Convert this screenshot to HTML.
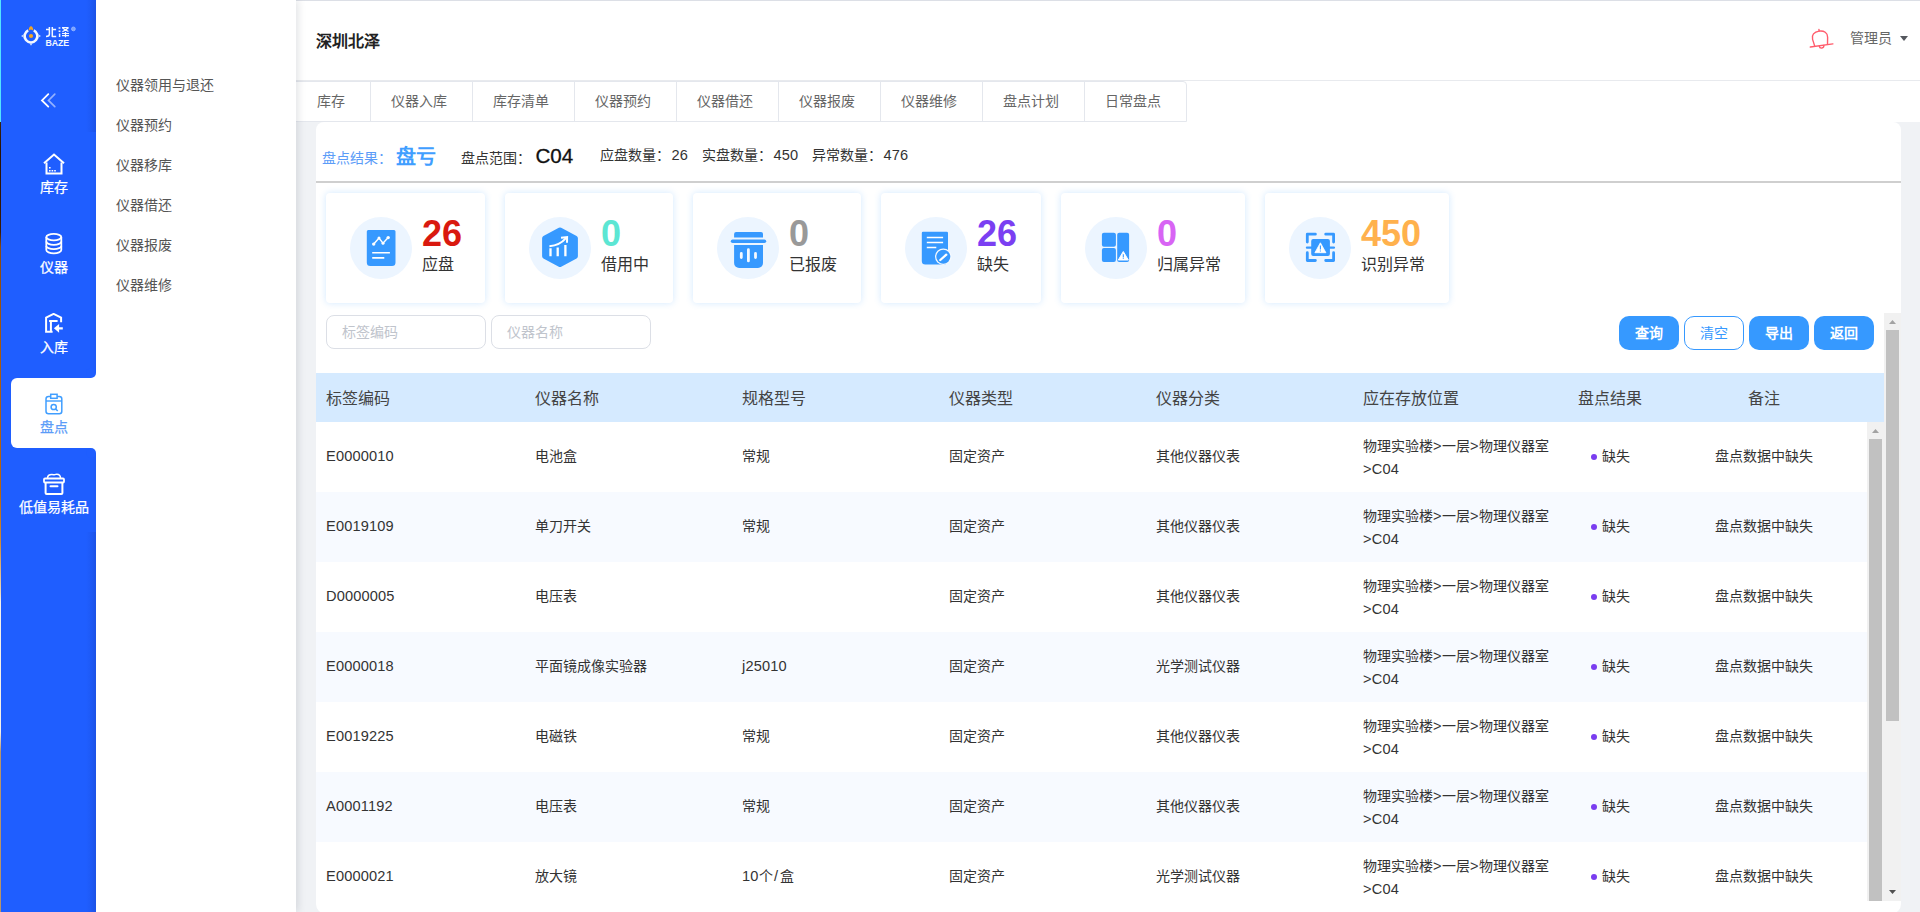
<!DOCTYPE html>
<html lang="zh-CN">
<head>
<meta charset="utf-8">
<title>深圳北泽</title>
<style>
*{box-sizing:border-box;margin:0;padding:0}
html,body{width:1920px;height:912px;overflow:hidden;background:#f0f2f5;font-family:"Liberation Sans",sans-serif;color:#333}
.abs{position:absolute}
#edge1{left:0;top:0;width:1px;height:122px;background:#52e4ff;z-index:50}
#edge2{left:0;top:122px;width:1px;height:790px;background:linear-gradient(to bottom,#3a2410 0,#2a1204 30px,#3a1a06 110px,#8a4a10 125px,#a85a10 230px,#b8650f 370px,#d08a35 420px,#ecd9b8 470px,#f4f0ea 480px,#f4f0ea 610px,#b89468 630px,#b89468 790px);z-index:50}
/* sidebar */
#side{left:0;top:0;width:96px;height:912px;background:#1f5eff}
.nav{left:11px;width:85px;height:70px;color:#fff;font-size:14px;text-align:center}
.nav svg{position:absolute;left:31.500px;top:4.500px;width:22px;height:22px}
.nav>span{-webkit-text-stroke:.25px currentColor;position:absolute;left:-10px;right:-10px;top:29px;line-height:20px;white-space:nowrap}
.nav.on{background:#fff;color:#5b9cf8;border-radius:6px 0 0 6px}
/* submenu */
#sub{left:96px;top:0;width:200px;height:912px;background:#fff;box-shadow:2px 0 8px rgba(0,21,41,.12);z-index:5}
#sub div{position:absolute;left:20px;font-size:14px;color:#555;line-height:20px}
/* header */
#hdr{left:296px;top:0;width:1624px;height:81px;background:#fff;border-top:1px solid #dcdfe6;border-bottom:1px solid #e8eaee}
#title{left:316px;top:31px;font-size:16px;font-weight:bold;color:#222;line-height:22px;z-index:6}
/* tabs */
#tabs{left:296px;top:81px;height:41px;width:891px;background:#fff;border:1px solid #e4e7ed;border-left:none;border-radius:0 4px 0 0;z-index:3}
.tab{top:81px;height:41px;line-height:40px;font-size:14px;color:#666;border-left:1px solid #e4e7ed;z-index:4;padding-left:20px}
/* card */
#card{left:316px;top:122px;width:1585px;height:792px;background:#fff;border-radius:8px 8px 10px 10px}

#hdr2{left:296px;top:81px;width:1624px;height:41px;background:#fff}
.tl{background:#e4e7ed;z-index:4}
.tt{top:91px;height:20px;line-height:20px;font-size:14px;color:#666;z-index:4;white-space:nowrap}
/* summary */
.sm .l{margin-left:1.500px}
.sm{white-space:nowrap;font-size:14px;line-height:20px;color:#333;top:148px}
#sumline{left:316px;top:181px;width:1585px;height:2px;background:#cfcfcf}
/* stat cards */
.sc{top:193px;height:110px;background:#fff;border-radius:4px;box-shadow:0 0 7px rgba(64,158,255,.24)}
.sc i{position:absolute;left:24px;top:24px;width:62px;height:62px;border-radius:50%;background:#ecf5ff}
.sc b{position:absolute;left:96px;top:21px;font-size:36px;line-height:40px;font-weight:bold;letter-spacing:0}
.sc>span{position:absolute;left:96px;top:61px;font-size:16px;line-height:22px;color:#333;white-space:nowrap}
.sc svg{position:absolute;left:24px;top:24px;width:62px;height:62px}
/* filter */
.inp{top:315px;width:160px;height:34px;border:1px solid #dcdfe6;border-radius:8px;background:#fff;color:#c0c4cc;font-size:14px;line-height:32px;padding-left:15px}
.btn{top:316px;width:60px;height:34px;border-radius:10px;background:#3699ff;color:#fff;font-size:14px;font-weight:bold;text-align:center;line-height:34px}
.btn.pl{background:#fff;border:1px solid #3699ff;color:#3699ff;line-height:32px;font-weight:normal}
/* table */
#th{left:316px;top:373px;width:1568px;height:49px;background:#d5eaff}
.h{top:387px;font-size:16px;line-height:24px;color:#444;white-space:nowrap}
.row{left:316px;width:1551px;height:70px}
.row.s{background:#f7faff}
.row div{position:absolute;font-size:14px;line-height:20px;color:#333;white-space:nowrap;top:24px}
.l{font-size:14.600px!important;letter-spacing:.16px}
.g{display:inline-block;width:9px;font-size:14.600px;font-style:normal}
.row .loc{top:13px;line-height:23px;left:1047px}
.row .dot{left:1275px;top:32px;width:6px;height:6px;border-radius:50%;background:#7a3df0}
/* scrollbars */
.trk{background:#f1f1f1}
.thm{background:#c1c1c1}
.j{display:inline-block;text-align:justify;text-align-last:justify;text-justify:inter-character;white-space:nowrap;font-size:inherit}
</style>
</head>
<body>
<div id="edge1" class="abs"></div><div id="edge2" class="abs"></div>
<div id="side" class="abs"></div>
<div class="abs" style="left:86px;top:0;width:10px;height:132px;background:linear-gradient(to right,rgba(10,20,90,0),rgba(10,20,90,.11));z-index:1"></div><div class="abs" style="left:86px;top:532px;width:10px;height:380px;background:linear-gradient(to right,rgba(10,20,90,0),rgba(10,20,90,.11));z-index:1"></div>
<svg class="abs" style="left:18px;top:22px;z-index:2" width="64" height="28" viewBox="0 0 64 28">
<g fill="none" stroke="#f4f8ff" stroke-width="2.600"><path d="M10.200 8.300A6.400 6.400 0 1 0 15.800 8.300"/></g>
<path d="M3 14l2.500-1.600v3.200zM23 14l-2.500-1.600v3.200zM13 23.800l-1.600-2.600h3.200z" fill="#c9dcff"/>
<circle cx="13" cy="14" r="2.100" fill="#f5a623"/>
<path d="M13 4.200c1.300 0 2.300 1.800 2.300 4.300l-2.300-1-2.300 1c0-2.500 1-4.300 2.300-4.300z" fill="#f5a623"/>
<g fill="none" stroke="#f2f7ff" stroke-width="1.500" stroke-linecap="butt" stroke-linejoin="round">
<path d="M28 7.600h3.400M31.400 4.900v7.300c0 1.600-1.200 2.200-3.400 2.300"/>
<path d="M34.300 4.900v9.500h3.900M34.300 7.600h3.800"/>
<path d="M40.600 5.900h1.800M40.600 9.200h1.800M41.600 11.500v3.500"/>
<path d="M44 5.600h6.600M44.600 6.200l5.800 3.400M50.400 6l-6 3.800" stroke-width="1.200"/>
<path d="M44 11.500h7M44 13.600h7M47.500 10v5.200" stroke-width="1.200"/>
</g>
<text x="27.600" y="23.600" font-family="Liberation Sans, sans-serif" font-size="8.800" font-weight="bold" fill="#f2f7ff" textLength="23.400" lengthAdjust="spacing">BAZE</text>
<circle cx="55.400" cy="6.900" r="1.900" fill="#7aa3ff" stroke="#9dbbff" stroke-width=".8"/>
</svg>
<svg class="abs" style="left:40px;top:92px;z-index:2" width="18" height="17" viewBox="0 0 18 17"><path d="M8.300 2.200L2 8.400l6.300 6.200" stroke="#fff" stroke-width="1.800" fill="none" stroke-linecap="round"/><path d="M14.800 2.200L8.500 8.400l6.300 6.200" stroke="#92b1ff" stroke-width="1.700" fill="none" stroke-linecap="round"/></svg>
<div class="abs nav" style="top:148px;background:none;z-index:7"><svg viewBox="0 0 22 22"><path d="M1 10.200L11 1.500l10 8.700" stroke="#fff" stroke-width="2" fill="none" stroke-linejoin="miter"/><path d="M3.500 9.500v11h15v-11" stroke="#fff" stroke-width="2" fill="none"/><path d="M6 14h1.600v1.600H6zM6 17h1.600v1.600H6zM8.600 17h1.600v1.600H8.600zM11.200 17h1.600v1.600h-1.600z" fill="#fff"/></svg><span><span class="j" style="width:2em">库存</span></span></div>
<div class="abs nav" style="top:228px;background:none;z-index:7"><svg viewBox="0.200 0.400 22 22"><ellipse cx="11" cy="4.500" rx="7.500" ry="3.200" stroke="#fff" stroke-width="1.800" fill="none"/><path d="M3.500 4.500v13c0 1.800 3.400 3.200 7.500 3.200s7.500-1.400 7.500-3.200v-13" stroke="#fff" stroke-width="1.800" fill="none"/><path d="M3.500 9c0 1.800 3.400 3.200 7.500 3.200s7.500-1.400 7.500-3.200M3.500 13.300c0 1.800 3.400 3.200 7.500 3.200s7.500-1.400 7.500-3.200" stroke="#fff" stroke-width="1.800" fill="none"/></svg><span><span class="j" style="width:2em">仪器</span></span></div>
<div class="abs nav" style="top:308px;background:none;z-index:7"><svg viewBox="0.400 0.700 22 22"><path d="M10 19.500H3.500V5.300L11 1.600l7.500 3.700V10" stroke="#fff" stroke-width="2" fill="none"/><path d="M6.500 8.800h8.500M8.300 8.800V19" stroke="#fff" stroke-width="2" fill="none"/><path d="M11.300 16l5.200-4.400v3.300h3.700v2.200h-3.700v3.300z" fill="#fff"/></svg><span><span class="j" style="width:2em">入库</span></span></div>
<div class="abs nav on" style="top:378px;z-index:6"></div>
<div class="abs nav on" style="top:388px;background:none;z-index:7"><svg viewBox="0 0 22 22"><rect x="3" y="3.500" width="15.800" height="17.300" rx="2.500" stroke="#409eff" stroke-width="1.500" fill="#fff"/><rect x="7.700" y="1.300" width="6.400" height="4" stroke="#409eff" stroke-width="1.500" fill="#fff"/><path d="M3 8h15.800" stroke="#409eff" stroke-width="1.400"/><circle cx="10.700" cy="14" r="2.600" stroke="#409eff" stroke-width="1.500" fill="none"/><path d="M12.700 16l2 2" stroke="#409eff" stroke-width="1.500"/></svg><span><span class="j" style="width:2em">盘点</span></span></div>
<div class="abs nav" style="top:468px;background:none;z-index:7"><svg viewBox="0 0 22 22"><path d="M4.500 5.200c0-2.600 2-3.700 4.400-3.700 1.200 0 1.700.3 2.200.3s1.200-.6 2.600-.6c2.400 0 3.800 1.400 3.800 4" stroke="#fff" stroke-width="1.500" fill="none"/><rect x="1" y="5.500" width="20" height="4" rx="1" stroke="#fff" stroke-width="1.800" fill="none"/><path d="M2.600 9.500v10.500a1 1 0 0 0 1 1h14.800a1 1 0 0 0 1-1V9.500" stroke="#fff" stroke-width="2" fill="none"/><path d="M7.500 13.200h7" stroke="#fff" stroke-width="2" stroke-linecap="round"/></svg><span><span class="j" style="width:5em">低值易耗品</span></span></div>
<div class="abs" style="left:91px;top:373px;width:5px;height:5px;background:#fff;z-index:6"></div><div class="abs" style="left:86px;top:368px;width:10px;height:10px;border-radius:50%;background:#1f5eff;z-index:6"></div>
<div class="abs" style="left:91px;top:448px;width:5px;height:5px;background:#fff;z-index:6"></div><div class="abs" style="left:86px;top:448px;width:10px;height:10px;border-radius:50%;background:#1f5eff;z-index:6"></div>
<div id="sub" class="abs">
<div style="top:75px"><span class="j" style="width:7em">仪器领用与退还</span></div>
<div style="top:115px"><span class="j" style="width:4em">仪器预约</span></div>
<div style="top:155px"><span class="j" style="width:4em">仪器移库</span></div>
<div style="top:195px"><span class="j" style="width:4em">仪器借还</span></div>
<div style="top:235px"><span class="j" style="width:4em">仪器报废</span></div>
<div style="top:275px"><span class="j" style="width:4em">仪器维修</span></div>
</div>
<div id="hdr" class="abs"></div>
<div id="title" class="abs"><span class="j" style="width:4em">深圳北泽</span></div>
<svg class="abs" style="left:1805px;top:24px;z-index:6" width="32" height="30" viewBox="0 0 32 30"><g transform="rotate(-8 16 15)" fill="none" stroke="#ff5c6c" stroke-width="1.400" stroke-linecap="round" stroke-linejoin="round"><path d="M15.300 5.300v1.600"/><path d="M8.800 21.200l-1.200-7c-.7-4.300 2.600-7.300 7.600-7.300s8.300 3 7.600 7.300l-1.100 7"/><path d="M4.300 21.500h22.800"/><path d="M13.300 21.800a2.300 2.300 0 0 0 4.600 0"/></g></svg>
<div class="abs" style="left:1850px;top:28px;font-size:14px;line-height:20px;color:#666;z-index:6;white-space:nowrap"><span class="j" style="width:3em">管理员</span></div>
<svg class="abs" style="left:1900px;top:36px;z-index:6" width="8" height="5" viewBox="0 0 8 5"><path d="M0 0h8L4 5z" fill="#55585e"/></svg>
<div id="hdr2" class="abs"></div>
<div class="abs" style="left:295px;top:81px;width:892px;height:41px;border:1px solid #e4e7ed;border-radius:0 4px 0 0;z-index:4"></div>
<div class="abs tl" style="left:370px;top:81px;width:1px;height:41px"></div>
<div class="abs tl" style="left:472px;top:81px;width:1px;height:41px"></div>
<div class="abs tl" style="left:574px;top:81px;width:1px;height:41px"></div>
<div class="abs tl" style="left:676px;top:81px;width:1px;height:41px"></div>
<div class="abs tl" style="left:778px;top:81px;width:1px;height:41px"></div>
<div class="abs tl" style="left:880px;top:81px;width:1px;height:41px"></div>
<div class="abs tl" style="left:982px;top:81px;width:1px;height:41px"></div>
<div class="abs tl" style="left:1084px;top:81px;width:1px;height:41px"></div>
<div class="abs tt" style="left:317px"><span class="j" style="width:2em">库存</span></div>
<div class="abs tt" style="left:391px"><span class="j" style="width:4em">仪器入库</span></div>
<div class="abs tt" style="left:493px"><span class="j" style="width:4em">库存清单</span></div>
<div class="abs tt" style="left:595px"><span class="j" style="width:4em">仪器预约</span></div>
<div class="abs tt" style="left:697px"><span class="j" style="width:4em">仪器借还</span></div>
<div class="abs tt" style="left:799px"><span class="j" style="width:4em">仪器报废</span></div>
<div class="abs tt" style="left:901px"><span class="j" style="width:4em">仪器维修</span></div>
<div class="abs tt" style="left:1003px"><span class="j" style="width:4em">盘点计划</span></div>
<div class="abs tt" style="left:1105px"><span class="j" style="width:4em">日常盘点</span></div>
<div id="card" class="abs"></div>
<div class="abs sm" style="left:322px;color:#5b9cf8"><span class="j" style="width:5em">盘点结果：</span></div>
<div class="abs sm" style="left:396px;top:144.500px;font-size:20px;line-height:24px;font-weight:bold;color:#409eff"><span class="j" style="width:2em">盘亏</span></div>
<div class="abs sm" style="left:461px"><span class="j" style="width:5em">盘点范围：</span></div>
<div class="abs sm" style="left:535.500px;top:144px;font-size:20.600px;line-height:24px;color:#111;-webkit-text-stroke:.3px #111">C04</div>
<div class="abs sm" style="left:600px;top:145px"><span class="j" style="width:5em">应盘数量：</span><span class="l">26</span></div>
<div class="abs sm" style="left:702px;top:145px"><span class="j" style="width:5em">实盘数量：</span><span class="l">450</span></div>
<div class="abs sm" style="left:812px;top:145px"><span class="j" style="width:5em">异常数量：</span><span class="l">476</span></div>
<div id="sumline" class="abs"></div>
<div class="abs sc" style="left:326px;width:159px"><i></i><svg viewBox="0 0 62 62"><path d="M16.800 14.500a1.500 1.500 0 0 1 1.500-1.500h25.700a1.500 1.500 0 0 1 1.500 1.500V45.500a3.500 3.500 0 0 1-3.500 3.500H20.300a3.500 3.500 0 0 1-3.500-3.500z" fill="#3699ff"/><path d="M23.700 27.100l5.300-6 4 5.100 5.200-5.600" stroke="#fff" stroke-width="1.500" fill="none"/><circle cx="23.700" cy="27.100" r="1.700" fill="#fff"/><circle cx="29" cy="21.100" r="1.500" fill="#fff"/><circle cx="33" cy="26.200" r="1.500" fill="#fff"/><circle cx="38.200" cy="20.600" r="1.700" fill="#fff"/><path d="M22.200 35.700h17.700M22.200 40.900h12.100" stroke="#fff" stroke-width="1.600"/></svg><b style="color:#d9190f">26</b><span><span class="j" style="width:2em">应盘</span></span></div>
<div class="abs sc" style="left:505px;width:168px"><i></i><svg viewBox="0 0 62 62"><path d="M31 12.900L46.400 21.200V39.200L31 47.500 15.600 39.200V21.200z" fill="#3699ff" stroke="#3699ff" stroke-width="5" stroke-linejoin="round"/><path d="M21.500 31.300v8M28.700 30.400v8.900M36.400 28.100v11.200" stroke="#fff" stroke-width="2.300"/><path d="M20.400 29.200c7-.5 12.500-3.200 16.500-8" stroke="#fff" stroke-width="2" fill="none"/><path d="M32 20.800l6.100-.6-.1 5.600" stroke="#fff" stroke-width="2" fill="none"/></svg><b style="color:#5ce6d3">0</b><span><span class="j" style="width:3em">借用中</span></span></div>
<div class="abs sc" style="left:693px;width:168px"><i></i><svg viewBox="0 0 62 62"><path d="M17.100 17a2 2 0 0 1 2-2h24.900a2 2 0 0 1 2 2v3.600H17.100z" fill="#3699ff"/><rect x="13.800" y="22.500" width="35.400" height="3.500" rx="1.750" fill="#3699ff"/><path d="M17.100 28.100H46v17.800a5 5 0 0 1-5 5H22.100a5 5 0 0 1-5-5z" fill="#3699ff"/><path d="M31.400 32.700v11.200M24.300 36.500v4M38.500 36.500v4" stroke="#f4f9ff" stroke-width="2.800" stroke-linecap="round"/></svg><b style="color:#999">0</b><span><span class="j" style="width:3em">已报废</span></span></div>
<div class="abs sc" style="left:881px;width:160px"><i></i><svg viewBox="0 0 62 62"><path d="M16.800 16a1.200 1.200 0 0 1 1.200-1.200h23.800A1.200 1.200 0 0 1 43 16v27.500a4 4 0 0 1-4 4H20.300a3.500 3.500 0 0 1-3.500-3.500z" fill="#3699ff"/><path d="M21.800 20.600h16.300M21.800 25.500h16.300M21.800 30.400h9.500" stroke="#fff" stroke-width="1.500"/><circle cx="38.300" cy="39.700" r="8.300" fill="#f4f9ff"/><circle cx="38.300" cy="39.700" r="7" fill="#3699ff"/><path d="M35.300 43l6-5.300" stroke="#fff" stroke-width="2.300" stroke-linecap="round"/></svg><b style="color:#7b3ff2">26</b><span><span class="j" style="width:2em">缺失</span></span></div>
<div class="abs sc" style="left:1061px;width:184px"><i></i><svg viewBox="0 0 62 62"><rect x="16.900" y="15.800" width="14" height="14" rx="2" fill="#3699ff"/><rect x="16.900" y="31.100" width="14" height="13.800" rx="2" fill="#3699ff"/><rect x="32.200" y="15.800" width="11.900" height="29.100" rx="2" fill="#3699ff"/><path d="M38.300 34.500l5 8.500h-10z" fill="#fff" stroke="#fff" stroke-width="1" stroke-linejoin="round"/><path d="M38.300 37.200v3.200M38.300 41.200v.9" stroke="#3699ff" stroke-width="1.100"/></svg><b style="color:#d864f4">0</b><span><span class="j" style="width:4em">归属异常</span></span></div>
<div class="abs sc" style="left:1265px;width:184px"><i></i><svg viewBox="0 0 62 62"><path d="M18.300 25V17.200h8.100M36.700 17.200h7.900V25M44.600 35.700v7.800h-7.900M26.400 43.500h-8.100v-7.800" stroke="#3699ff" stroke-width="2.800" fill="none" stroke-linecap="round" stroke-linejoin="round"/><path d="M18 30.600h5M40 30.600h4.900" stroke="#3699ff" stroke-width="2.400" stroke-linecap="round"/><rect x="22.200" y="22" width="18.700" height="17" rx="2" fill="#3699ff"/><path d="M31.400 25.800l5.500 9.900h-11z" fill="#fff" stroke="#fff" stroke-width=".8" stroke-linejoin="round"/><path d="M31.400 28.500v4M31.400 33.400v1" stroke="#3699ff" stroke-width="1.100"/></svg><b style="color:#ffb14d">450</b><span><span class="j" style="width:4em">识别异常</span></span></div>
<div class="abs inp" style="left:326px"><span class="j" style="width:4em">标签编码</span></div>
<div class="abs inp" style="left:491px"><span class="j" style="width:4em">仪器名称</span></div>
<div class="abs btn" style="left:1619px"><span class="j" style="width:2em">查询</span></div>
<div class="abs btn pl" style="left:1684px"><span class="j" style="width:2em">清空</span></div>
<div class="abs btn" style="left:1749px"><span class="j" style="width:2em">导出</span></div>
<div class="abs btn" style="left:1814px"><span class="j" style="width:2em">返回</span></div>
<div id="th" class="abs"></div>
<div class="abs h" style="left:326px"><span class="j" style="width:4em">标签编码</span></div>
<div class="abs h" style="left:535px"><span class="j" style="width:4em">仪器名称</span></div>
<div class="abs h" style="left:742px"><span class="j" style="width:4em">规格型号</span></div>
<div class="abs h" style="left:949px"><span class="j" style="width:4em">仪器类型</span></div>
<div class="abs h" style="left:1156px"><span class="j" style="width:4em">仪器分类</span></div>
<div class="abs h" style="left:1363px"><span class="j" style="width:6em">应在存放位置</span></div>
<div class="abs h" style="left:1578px"><span class="j" style="width:4em">盘点结果</span></div>
<div class="abs h" style="left:1748px"><span class="j" style="width:2em">备注</span></div>
<div class="abs row" style="top:422px"><div class="l" style="left:10px">E0000010</div><div style="left:219px"><span class="j" style="width:3em">电池盒</span></div><div style="left:426px"><span class="j" style="width:2em">常规</span></div><div style="left:633px"><span class="j" style="width:4em">固定资产</span></div><div style="left:840px"><span class="j" style="width:6em">其他仪器仪表</span></div><div class="loc"><span class="j" style="width:5em">物理实验楼</span><i class="g">&gt;</i><span class="j" style="width:2em">一层</span><i class="g">&gt;</i><span class="j" style="width:5em">物理仪器室</span><br><span class="l">&gt;C04</span></div><div class="dot"></div><div style="left:1286px"><span class="j" style="width:2em">缺失</span></div><div style="left:1399px"><span class="j" style="width:7em">盘点数据中缺失</span></div></div>
<div class="abs row s" style="top:492px"><div class="l" style="left:10px">E0019109</div><div style="left:219px"><span class="j" style="width:4em">单刀开关</span></div><div style="left:426px"><span class="j" style="width:2em">常规</span></div><div style="left:633px"><span class="j" style="width:4em">固定资产</span></div><div style="left:840px"><span class="j" style="width:6em">其他仪器仪表</span></div><div class="loc"><span class="j" style="width:5em">物理实验楼</span><i class="g">&gt;</i><span class="j" style="width:2em">一层</span><i class="g">&gt;</i><span class="j" style="width:5em">物理仪器室</span><br><span class="l">&gt;C04</span></div><div class="dot"></div><div style="left:1286px"><span class="j" style="width:2em">缺失</span></div><div style="left:1399px"><span class="j" style="width:7em">盘点数据中缺失</span></div></div>
<div class="abs row" style="top:562px"><div class="l" style="left:10px">D0000005</div><div style="left:219px"><span class="j" style="width:3em">电压表</span></div><div style="left:426px"></div><div style="left:633px"><span class="j" style="width:4em">固定资产</span></div><div style="left:840px"><span class="j" style="width:6em">其他仪器仪表</span></div><div class="loc"><span class="j" style="width:5em">物理实验楼</span><i class="g">&gt;</i><span class="j" style="width:2em">一层</span><i class="g">&gt;</i><span class="j" style="width:5em">物理仪器室</span><br><span class="l">&gt;C04</span></div><div class="dot"></div><div style="left:1286px"><span class="j" style="width:2em">缺失</span></div><div style="left:1399px"><span class="j" style="width:7em">盘点数据中缺失</span></div></div>
<div class="abs row s" style="top:632px"><div class="l" style="left:10px">E0000018</div><div style="left:219px"><span class="j" style="width:8em">平面镜成像实验器</span></div><div class="l" style="left:426px">j25010</div><div style="left:633px"><span class="j" style="width:4em">固定资产</span></div><div style="left:840px"><span class="j" style="width:6em">光学测试仪器</span></div><div class="loc"><span class="j" style="width:5em">物理实验楼</span><i class="g">&gt;</i><span class="j" style="width:2em">一层</span><i class="g">&gt;</i><span class="j" style="width:5em">物理仪器室</span><br><span class="l">&gt;C04</span></div><div class="dot"></div><div style="left:1286px"><span class="j" style="width:2em">缺失</span></div><div style="left:1399px"><span class="j" style="width:7em">盘点数据中缺失</span></div></div>
<div class="abs row" style="top:702px"><div class="l" style="left:10px">E0019225</div><div style="left:219px"><span class="j" style="width:3em">电磁铁</span></div><div style="left:426px"><span class="j" style="width:2em">常规</span></div><div style="left:633px"><span class="j" style="width:4em">固定资产</span></div><div style="left:840px"><span class="j" style="width:6em">其他仪器仪表</span></div><div class="loc"><span class="j" style="width:5em">物理实验楼</span><i class="g">&gt;</i><span class="j" style="width:2em">一层</span><i class="g">&gt;</i><span class="j" style="width:5em">物理仪器室</span><br><span class="l">&gt;C04</span></div><div class="dot"></div><div style="left:1286px"><span class="j" style="width:2em">缺失</span></div><div style="left:1399px"><span class="j" style="width:7em">盘点数据中缺失</span></div></div>
<div class="abs row s" style="top:772px"><div class="l" style="left:10px">A0001192</div><div style="left:219px"><span class="j" style="width:3em">电压表</span></div><div style="left:426px"><span class="j" style="width:2em">常规</span></div><div style="left:633px"><span class="j" style="width:4em">固定资产</span></div><div style="left:840px"><span class="j" style="width:6em">其他仪器仪表</span></div><div class="loc"><span class="j" style="width:5em">物理实验楼</span><i class="g">&gt;</i><span class="j" style="width:2em">一层</span><i class="g">&gt;</i><span class="j" style="width:5em">物理仪器室</span><br><span class="l">&gt;C04</span></div><div class="dot"></div><div style="left:1286px"><span class="j" style="width:2em">缺失</span></div><div style="left:1399px"><span class="j" style="width:7em">盘点数据中缺失</span></div></div>
<div class="abs row" style="top:842px"><div class="l" style="left:10px">E0000021</div><div style="left:219px"><span class="j" style="width:3em">放大镜</span></div><div style="left:426px"><span class="l">10</span><span class="j" style="width:1em">个</span><span class="l" style="margin:0 1.500px">/</span><span class="j" style="width:1em">盒</span></div><div style="left:633px"><span class="j" style="width:4em">固定资产</span></div><div style="left:840px"><span class="j" style="width:6em">光学测试仪器</span></div><div class="loc"><span class="j" style="width:5em">物理实验楼</span><i class="g">&gt;</i><span class="j" style="width:2em">一层</span><i class="g">&gt;</i><span class="j" style="width:5em">物理仪器室</span><br><span class="l">&gt;C04</span></div><div class="dot"></div><div style="left:1286px"><span class="j" style="width:2em">缺失</span></div><div style="left:1399px"><span class="j" style="width:7em">盘点数据中缺失</span></div></div>
<div class="abs trk" style="left:1884px;top:313px;width:17px;height:588px"></div>
<div class="abs thm" style="left:1886px;top:330px;width:13px;height:391px"></div>
<div class="abs trk" style="left:1867px;top:422px;width:17px;height:479px"></div>
<div class="abs thm" style="left:1869px;top:439px;width:13px;height:462px"></div>
<svg class="abs" style="left:1889px;top:320px" width="7" height="4" viewBox="0 0 7 4"><path d="M0 4L3.500 0 7 4z" fill="#a3a3a3"/></svg>
<svg class="abs" style="left:1889px;top:890px" width="7" height="4" viewBox="0 0 7 4"><path d="M0 0L3.500 4 7 0z" fill="#505050"/></svg>
<svg class="abs" style="left:1872px;top:429px" width="7" height="4" viewBox="0 0 7 4"><path d="M0 4L3.500 0 7 4z" fill="#a3a3a3"/></svg>
<div class="abs" style="left:330px;top:901px;width:1561px;height:11px;background:#fff"></div>
</body>
</html>
